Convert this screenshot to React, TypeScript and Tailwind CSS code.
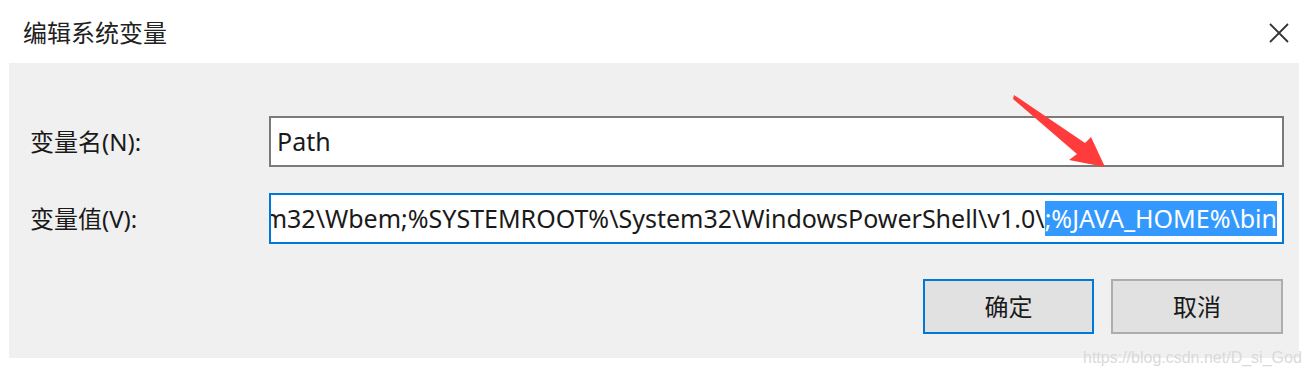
import React from "react";

const FONT = { fontFamily: '"Noto Sans", "Noto Sans CJK SC", sans-serif' };

export default function App() {
  const value = "System32\\Wbem;%SYSTEMROOT%\\System32\\WindowsPowerShell\\v1.0\\";
  return (
    <div className="relative w-[1308px] h-[378px] bg-white overflow-hidden text-[#1a1a1a]" style={FONT}>
      <div className="h-[63px] flex items-center justify-between pl-[23px] pr-[18px]">
        <span className="text-[24px] leading-none mt-[3px] text-[#222]">编辑系统变量</span>
        <svg width="22" height="22" viewBox="0 0 22 22" className="mt-[2px]">
          <path d="M2 2 L20 20 M20 2 L2 20" stroke="#333" strokeWidth="1.8" />
        </svg>
      </div>
      <div className="ml-[9px] w-[1290px] h-[295px] bg-[#f0f0f0] flex flex-col pt-[53px] pr-[15px]">
        <div className="flex items-center h-[51px]">
          <div className="w-[260px] pl-[21px] text-[24px] whitespace-nowrap">变量名(N):</div>
          <div className="flex-1 h-[51px] border-2 border-[#7a7a7a] bg-white flex items-center pl-[6px] text-[25px]">
            Path
          </div>
        </div>
        <div className="flex items-center h-[51px] mt-[26px]">
          <div className="w-[260px] pl-[21px] text-[24px] whitespace-nowrap">变量值(V):</div>
          <div className="flex-1 min-w-0 h-[51px] border-2 border-[#0078d7] bg-white flex items-center justify-end pr-[5px] overflow-hidden text-[25px] whitespace-nowrap">
            <span className="shrink-0">{value}</span>
            <span className="shrink-0 bg-[#3399ff] text-white h-[35px] flex items-center">;%JAVA_HOME%\bin</span>
          </div>
        </div>
        <div className="flex justify-end gap-[17px] mt-[35px] pr-[1px]">
          <div className="w-[171px] h-[55px] border-2 border-[#0078d7] bg-[#e1e1e1] flex items-center justify-center text-[24px]">
            确定
          </div>
          <div className="w-[172px] h-[55px] border-2 border-[#adadad] bg-[#e1e1e1] flex items-center justify-center text-[24px]">
            取消
          </div>
        </div>
      </div>
      <svg className="absolute left-0 top-0" width="1308" height="378" viewBox="0 0 1308 378">
        <path d="M1014 95 L1085 143 L1091 137 L1105 167 L1069 160 L1077 154 L1013 99 Z" fill="#ff3b3b" />
      </svg>
      <div
        className="absolute left-[1083px] top-[350px] text-[16px] text-[#dadada] leading-none"
        style={{ fontFamily: '"Liberation Sans", Arial, sans-serif' }}
      >
        https://blog.csdn.net/D_si_God
      </div>
    </div>
  );
}
